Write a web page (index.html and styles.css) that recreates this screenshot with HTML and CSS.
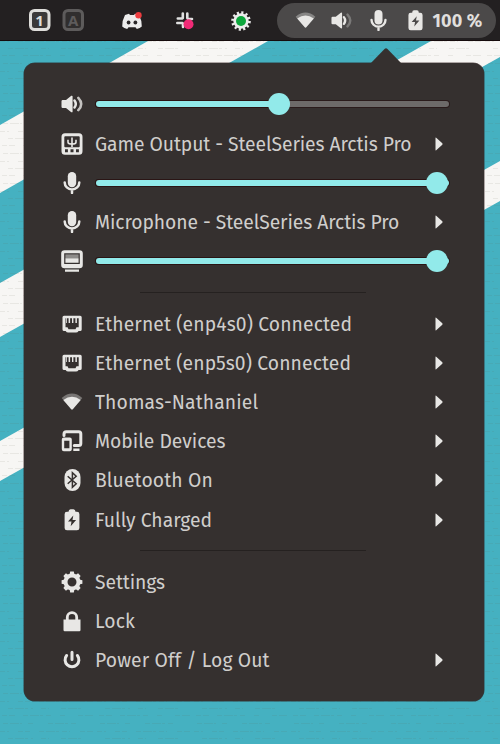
FILE: index.html
```html
<!DOCTYPE html>
<html lang="en">
<head>
<meta charset="utf-8">
<title>System menu</title>
<link rel="stylesheet" href="styles.css">
</head>
<body>
<svg class="defs" width="0" height="0" aria-hidden="true">
  <symbol id="speaker" viewBox="0 0 22 22"><path d="M.5 8.2Q.5 7 1.7 7H5l5.3-4.2q1.3-.5 1.3.8v14.8q0 1.300-1.300.8L5 15H1.700Q.5 15 .5 13.800Z"/><path class="line" d="M13.500 7.500q2.600 3.500 0 7"/><path class="line outer" d="M17.300 4.800q5.800 6.200 0 12.400"/></symbol>
  <symbol id="mic" viewBox="0 0 22 22"><rect x="6.800" y="0" width="8.400" height="15.200" rx="4.200"/><path class="line" d="M3.700 10.500a7.300 7 0 0 0 14.600 0M11 17.500V21"/></symbol>
  <symbol id="card" viewBox="0 0 22 22"><path fill-rule="evenodd" d="M4 .3h14q3.500 0 3.500 3.500v14.500q0 3.500-3.500 3.500H4q-3.500 0-3.500-3.500V3.800Q.5.3 4 .3ZM4.200 3.300q-.9 0-.9 1v8.900q0 1 .9 1h13.600q.9 0 .9-1V4.300q0-1-.9-1ZM4 16.300v2.900h2.900v-2.900Zm5.500 0v2.900h3v-2.900Zm5.500 0v2.900h2.900v-2.900Z"/><path class="thin" d="M11 4.600v9.400M7 6.800v2.400q0 1.800 4 1.800t4-1.800V6.800"/></symbol>
  <symbol id="display" viewBox="0 0 22 22"><path fill-rule="evenodd" d="M3.500.2h15q3.300 0 3.300 3.300v11.500q0 3.300-3.300 3.300h-15Q.2 18.300.2 15V3.500Q.2.2 3.500.2ZM3.200 3.200v10.900h15.600V3.200Z"/><path opacity=".5" d="M4.400 4.400h13.200v3.800H4.400Z"/><path d="M4.400 8.200h13.200v4.600H4.400ZM4 19.500h14v2.300H4Z"/></symbol>
  <symbol id="ethernet" viewBox="0 0 22 22"><path fill-rule="evenodd" d="M3 2.800h16.200q1.500 0 1.500 1.500v12.200q0 1.600-1.600 1.600h-1.500q-1 1.500-2.600 1.500H7.200q-1.600 0-2.600-1.500H3.100q-1.600 0-1.600-1.600V4.300Q1.500 2.800 3 2.800ZM4.500 5.300v9h2l1 2h7l1-2h2.200v-9h-1.800v4.800h-1.500V5.300h-2v4.800h-1.400V5.300h-1.900v4.800H7.600V5.300H6v4.800h-.8V5.300Z"/></symbol>
  <symbol id="wifi" viewBox="0 0 22 22"><path opacity=".38" d="M.7 7Q11-1.800 21.300 7L11 18.800Z"/><path d="M2.300 9Q11 2.300 19.700 9L12 17.900q-1 1.100-2 0Z"/></symbol>
  <symbol id="mobile" viewBox="0 0 22 22"><path class="thick" d="M3 5.600V4q0-2.300 2.300-2.300h12.400q2.100 0 2.100 2.100v9.700q0 2.100-2.100 2.100h-4.400"/><path fill-rule="evenodd" d="M2.800 7.500h6q2 0 2 2v9.700q0 2-2 2h-6q-2 0-2-2V9.500q0-2 2-2Zm.4 3.200v7.600h5.200v-7.600ZM12.300 18.500h6.200v2.500h-6.200Z"/></symbol>
  <symbol id="bluetooth" viewBox="0 0 22 22"><rect x="3.500" y="0" width="16" height="22" rx="8"/><path class="cut-line" d="m6.700 7.200 8.500 7.500-3.800 3.500V3.700l3.800 3.500-8.500 7.500"/></symbol>
  <symbol id="battery" viewBox="0 0 22 22"><path fill-rule="evenodd" d="M6 2.800h1.500q.1-2.600 2-2.600h3q1.900 0 2 2.600H16q2.400 0 2.400 2.400v13.700q0 2.400-2.400 2.400H6q-2.400 0-2.400-2.400V5.200Q3.600 2.800 6 2.800ZM12.300 6.500 7 12.600h3.500l-.8 4.700 5.400-6.200h-3.600Z"/></symbol>
  <symbol id="gear" viewBox="0 0 22 22"><circle class="ring" cx="11" cy="11" r="6.500"/><g id="teeth"><path d="M8.500 4 9.200.6h3.600l.7 3.400ZM8.500 18l.7 3.400h3.600l.7-3.400ZM4 8.500.6 9.200v3.600l3.400.7ZM18 8.500l3.400.7v3.600l-3.400.7Z"/></g><use href="#teeth" transform="rotate(45 11 11)"/></symbol>
  <symbol id="lock" viewBox="0 0 22 22"><path d="M2.500 9.500h17V20q0 1.200-1.200 1.200H3.700Q2.500 21.200 2.500 20Z"/><path class="shackle" d="M6.300 10V7.300a4.700 4.700 0 0 1 9.400 0V10"/></symbol>
  <symbol id="power" viewBox="0 0 22 22"><path class="thick" d="M5.600 6.500a6.900 6.900 0 1 0 10.800 0M11 3.200v7.200"/></symbol>
  <symbol id="arrow" viewBox="0 0 8 14"><path d="M.5 1.200Q.5.2 1.200.8L7.300 6.300q.6.700 0 1.400L1.200 13.200q-.7.600-.7-.4Z"/></symbol>
</svg>

<div class="desktop">
  <svg class="wallpaper" viewBox="0 0 500 744" aria-hidden="true">
    <defs><pattern id="weave" width="97" height="30" patternUnits="userSpaceOnUse">
      <path class="weave-line" d="M3 3.500h19M28 3.500h7M48 3.500h28M0 11.500h9M18 11.500h12M39 11.500h31M80 11.500h13M8 18.500h25M41 18.500h8M61 18.500h20M2 25.500h13M23 25.500h29M60 25.500h6M78 25.500h15"/>
    </pattern></defs>
    <rect class="sea" width="500" height="744"/>
    <path class="stripe" d="M0 125 148 41H268L0 193ZM0 283 431 41H500V57L0 337ZM0 441 500 161V201L0 481Z"/>
    <rect width="500" height="744" fill="url(#weave)"/>
  </svg>

  <header class="topbar">
    <div class="tray">
      <svg class="tray-icon keys" viewBox="0 0 58 24"><rect class="key on" x="2.500" y="1.500" width="18.500" height="19" rx="4"/><rect class="key off" x="36" y="1.500" width="18.500" height="19" rx="4"/><text class="key-text on-text" x="11.500" y="16.500">1</text><text class="key-text off-text" x="45.300" y="16.500">A</text></svg>
      <svg class="tray-icon discord" viewBox="0 0 22 18"><path class="light" d="M4 3 8 1.700l1 1.200h4l1-1.200L18 3q3 5.500 2.800 11.500Q19 16.400 15.800 17l-1.300-1.800h-7L6.200 17Q3 16.400 1.200 14.500 1 8.500 4 3Z"/><ellipse class="eye" cx="7.600" cy="10.500" rx="1.900" ry="2.100"/><ellipse class="eye" cx="14.400" cy="10.500" rx="1.900" ry="2.100"/><circle class="red" cx="17.500" cy="3.300" r="3.200"/></svg>
      <svg class="tray-icon slack" viewBox="0 0 20 20"><path class="light-line" d="M7.800 2.500V7M12.300 2.500V7M2.800 7.500h4.500M13 8h4M2.300 12h5M8 12.500V16"/><circle class="pink" cx="13.500" cy="13.300" r="5"/></svg>
      <svg class="tray-icon sun" viewBox="0 0 20 20"><circle class="rays" cx="10" cy="10" r="8.300"/><circle class="light" cx="10" cy="10" r="7.700"/><circle class="green" cx="10" cy="10" r="5"/></svg>
    </div>
    <div class="status">
      <svg class="icon wifi"><use href="#wifi"/></svg>
      <svg class="icon sound"><use href="#speaker"/></svg>
      <svg class="icon"><use href="#mic"/></svg>
      <svg class="icon"><use href="#battery"/></svg>
      <span class="percent">100 %</span>
    </div>
  </header>

  <main class="menu">
    <svg class="pointer" viewBox="0 0 32 16"><path d="M0 16 14.500 1Q16-.5 17.500 1L32 16Z"/></svg>
    <div class="row"><svg class="icon"><use href="#speaker"/></svg><div class="slider half"><div class="fill"></div><div class="knob"></div></div></div>
    <div class="row"><svg class="icon"><use href="#card"/></svg><span class="label tight">Game Output - SteelSeries Arctis Pro</span><svg class="arrow"><use href="#arrow"/></svg></div>
    <div class="row"><svg class="icon"><use href="#mic"/></svg><div class="slider"><div class="fill"></div><div class="knob"></div></div></div>
    <div class="row"><svg class="icon"><use href="#mic"/></svg><span class="label tight">Microphone - SteelSeries Arctis Pro</span><svg class="arrow"><use href="#arrow"/></svg></div>
    <div class="row"><svg class="icon"><use href="#display"/></svg><div class="slider"><div class="fill"></div><div class="knob"></div></div></div>
    <div class="separator"></div>
    <div class="row"><svg class="icon"><use href="#ethernet"/></svg><span class="label loose">Ethernet (enp4s0) Connected</span><svg class="arrow"><use href="#arrow"/></svg></div>
    <div class="row"><svg class="icon"><use href="#ethernet"/></svg><span class="label loose">Ethernet (enp5s0) Connected</span><svg class="arrow"><use href="#arrow"/></svg></div>
    <div class="row"><svg class="icon"><use href="#wifi"/></svg><span class="label loose">Thomas-Nathaniel</span><svg class="arrow"><use href="#arrow"/></svg></div>
    <div class="row"><svg class="icon"><use href="#mobile"/></svg><span class="label">Mobile Devices</span><svg class="arrow"><use href="#arrow"/></svg></div>
    <div class="row"><svg class="icon"><use href="#bluetooth"/></svg><span class="label loose">Bluetooth On</span><svg class="arrow"><use href="#arrow"/></svg></div>
    <div class="row"><svg class="icon"><use href="#battery"/></svg><span class="label">Fully Charged</span><svg class="arrow"><use href="#arrow"/></svg></div>
    <div class="separator"></div>
    <div class="row"><svg class="icon"><use href="#gear"/></svg><span class="label tight">Settings</span></div>
    <div class="row"><svg class="icon"><use href="#lock"/></svg><span class="label loose">Lock</span></div>
    <div class="row"><svg class="icon"><use href="#power"/></svg><span class="label loose">Power Off / Log Out</span><svg class="arrow"><use href="#arrow"/></svg></div>
  </main>
</div>
</body>
</html>
```
FILE: styles.css
```css
* { box-sizing: border-box; }
body { margin: 0; background: #45b0c0; font-family: "Fira Sans", "Noto Sans", sans-serif; color: #d0cecc; }
svg { display: block; flex: none; }
.defs { position: absolute; }
.desktop { position: relative; width: 500px; height: 744px; overflow: hidden; }
.wallpaper { position: absolute; inset: 0; width: 500px; height: 744px; }
.sea { fill: #45b1c1; }
.stripe { fill: #f7f6f4; }
.weave-line { fill: none; stroke: #655f4c; stroke-width: 1; stroke-dasharray: 5 2 9 1 3 3; opacity: .1; }

.topbar { position: relative; display: flex; justify-content: space-between; height: 41px; padding: 3px 4px 3px 28px; background: #232021; border-bottom: 1px solid #150b0c; }
.tray { display: flex; align-items: center; height: 35px; }
.keys { width: 58px; height: 24px; margin-top: 1px; }
.key { stroke-width: 3; }
.key.on { fill: #3b3939; stroke: #deddda; }
.key.off { fill: #302e2e; stroke: #5d5b5b; }
.key-text { font: bold 15px "Noto Sans", sans-serif; text-anchor: middle; }
.on-text { fill: #deddda; }
.off-text { fill: #5d5b5b; }
.discord { width: 22px; height: 18px; margin-left: 35px; }
.slack { width: 20px; height: 20px; margin-left: 32px; }
.sun { width: 20px; height: 20px; margin-left: 36px; }
.light { fill: #ececec; }
.light-line { fill: none; stroke: #e0e0e0; stroke-width: 2.600; stroke-linecap: round; }
.eye { fill: #2b2829; }
.red { fill: #ed3c3f; }
.pink { fill: #f02a76; }
.green { fill: #0da63c; }
.rays { fill: none; stroke: #ececec; stroke-width: 3; stroke-dasharray: 2.100 2.245; }

.status { display: flex; align-items: center; width: 219px; height: 35px; padding-left: 18px; border-radius: 18px; background: #4b4949; }
.status .icon { width: 21px; height: 21px; margin-right: 15.500px; --cut: #4b4949; }
.status .sound { --outer: .3; margin-left: -.5px; margin-right: 16px; }
.percent { margin-left: -8.500px; font-size: 18px; font-weight: 700; white-space: nowrap; color: #e0dfdd; letter-spacing: .15px; }

.menu { position: absolute; left: 24px; top: 63px; width: 460px; height: 638px; padding: 21.800px 35px 0 36.500px; border-radius: 11px; background: #35302f; box-shadow: 0 0 0 .5px rgba(40, 22, 22, .7); }
.pointer { position: absolute; left: 346px; top: -15px; width: 32px; height: 16px; fill: #35302f; }
.row { display: flex; align-items: center; height: 39.200px; }
.icon { width: 22px; height: 22px; margin-right: 13px; overflow: visible; fill: #e8e7e5; --cut: #35302f; --outer: .8; }
.line { fill: none; stroke: #e8e7e5; stroke-width: 2.500; stroke-linecap: round; }
.outer { opacity: var(--outer); }
.thin { fill: none; stroke: #e8e7e5; stroke-width: 1.600; }
.thick { fill: none; stroke: #e8e7e5; stroke-width: 3; stroke-linecap: round; }
.cut-line { fill: none; stroke: var(--cut); stroke-width: 1.500; }
.ring { fill: none; stroke: #e8e7e5; stroke-width: 4; }
.shackle { fill: none; stroke: #e8e7e5; stroke-width: 2.800; }
.label { margin-left: -.5px; font-size: 20px; line-height: 26px; white-space: nowrap; transform: scaleX(.965); transform-origin: left; }
.tight { letter-spacing: -.08px; }
.loose { letter-spacing: .12px; }
.arrow { width: 8px; height: 14px; margin-left: auto; margin-right: 6px; fill: #e8e7e5; }

.slider { display: flex; align-items: center; width: 353px; height: 6px; border-radius: 3px; background: #6d6a69; box-shadow: 0 0 0 1px #2a1b1b; }
.fill { flex: 1; height: 6px; border-radius: 3px; background: #92eaea; box-shadow: 0 0 0 1px #2a1515; }
.slider:not(.half) { background: #92eaea; }
.knob { flex: none; width: 22px; height: 22px; margin: 0 1px 0 -11px; border-radius: 50%; background: #92eaea; }
.half .fill { flex: none; width: 183px; }
.separator { width: 226px; height: 23.300px; margin-left: 79px; display: flex; align-items: center; }
.separator::before { content: ""; width: 100%; height: 1px; background: #252120; }
```
